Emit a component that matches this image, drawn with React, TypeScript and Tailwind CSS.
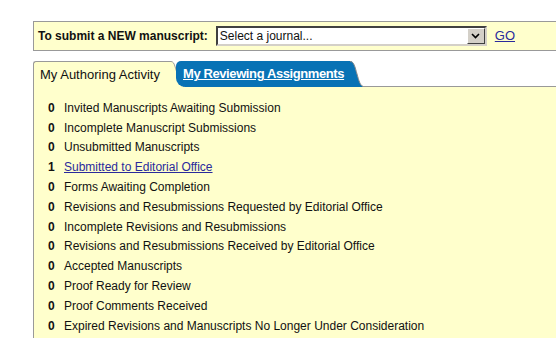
const rows: { count: number; label: string; link?: boolean }[] = [
  { count: 0, label: "Invited Manuscripts Awaiting Submission" },
  { count: 0, label: "Incomplete Manuscript Submissions" },
  { count: 0, label: "Unsubmitted Manuscripts" },
  { count: 1, label: "Submitted to Editorial Office", link: true },
  { count: 0, label: "Forms Awaiting Completion" },
  { count: 0, label: "Revisions and Resubmissions Requested by Editorial Office" },
  { count: 0, label: "Incomplete Revisions and Resubmissions" },
  { count: 0, label: "Revisions and Resubmissions Received by Editorial Office" },
  { count: 0, label: "Accepted Manuscripts" },
  { count: 0, label: "Proof Ready for Review" },
  { count: 0, label: "Proof Comments Received" },
  { count: 0, label: "Expired Revisions and Manuscripts No Longer Under Consideration" },
];

const App = () => {
  return (
    <div
      className="w-[556px] h-[338px] overflow-hidden bg-white pt-[21px] pl-[33px] text-[12px] text-[#111]"
      style={{ fontFamily: '"Liberation Sans", Arial, sans-serif' }}
    >
      {/* submit bar */}
      <div className="h-[30px] border border-r-0 border-[#999] bg-[#ffffcc] flex items-center pl-[4px]">
        <span className="font-bold">To submit a NEW manuscript:</span>
        <div className="ml-[8px] w-[271px] h-[20px] bg-white border-t-2 border-l-2 border-b-2 border-r-2 border-t-[#404040] border-l-[#404040] border-b-[#d4d0c8] border-r-[#d4d0c8] flex items-center">
          <span className="flex-1 pl-[2px]">Select a journal...</span>
          <div className="w-[18px] h-[16px] bg-[#d4d0c8] border border-t-white border-l-white border-b-[#404040] border-r-[#404040] flex items-center justify-center">
            <svg width="9" height="6" viewBox="0 0 9 6">
              <polyline points="1,1 4.5,4.5 8,1" fill="none" stroke="#000" strokeWidth="1.6" />
            </svg>
          </div>
        </div>
        <a className="ml-[8px] text-[13px] text-[#2a2a9c] underline cursor-pointer">GO</a>
      </div>

      {/* tabs */}
      <div className="mt-[10px] flex h-[26px]">
        <div className="flex shrink-0 relative">
          <div className="w-[137px] h-[26px] bg-[#ffffcc] border-t border-l border-[#999] rounded-tl-[3px] pl-[6px] flex items-center text-[13px] text-[#111] whitespace-nowrap">
            My Authoring Activity
          </div>
          <svg width="14" height="26" viewBox="0 0 14 26" className="block">
            <path d="M0 0.5 H1 C5 0.5 5 8 8 14 C10 19 12 24 14 26 H0 Z" fill="#ffffcc" />
            <path d="M0 0.5 H1 C5 0.5 5 8 8 14 C10 19 12 24 14 26" fill="none" stroke="#999" strokeWidth="1" />
          </svg>
        </div>
        <div className="flex shrink-0 relative z-10 -ml-[8px]">
          <div className="w-[172px] h-[26px] bg-[#0872b5] rounded-tl-[5px] rounded-bl-[9px] pl-[7px] flex items-center whitespace-nowrap">
            <span className="text-[13px] font-bold text-white underline tracking-[-0.4px]">My Reviewing Assignments</span>
          </div>
          <svg width="15" height="26" viewBox="0 0 15 26" className="block">
            <path d="M0 0 H2 C6 0 7 6 9 13 C11 20 12 24 15 25.5 V26 H0 Z" fill="#0872b5" />
            <path d="M2 0.5 C6 0.5 7 6 9 13 C11 20 12 24 15 25.5" fill="none" stroke="#8a8a8a" strokeWidth="1" />
          </svg>
        </div>
        <div className="flex-1 border-b border-[#999]" />
      </div>

      {/* activity list */}
      <div className="h-[260px] bg-[#ffffcc] border-l border-[#999] pt-[11px] pl-[14px]">
        {rows.map((r) => (
          <div key={r.label} className="h-[19.8px] flex items-center">
            <span className="w-[16px] font-bold">{r.count}</span>
            {r.link ? (
              <a className="text-[#2a2a9c] underline cursor-pointer">{r.label}</a>
            ) : (
              <span>{r.label}</span>
            )}
          </div>
        ))}
      </div>
    </div>
  );
};

export default App;
